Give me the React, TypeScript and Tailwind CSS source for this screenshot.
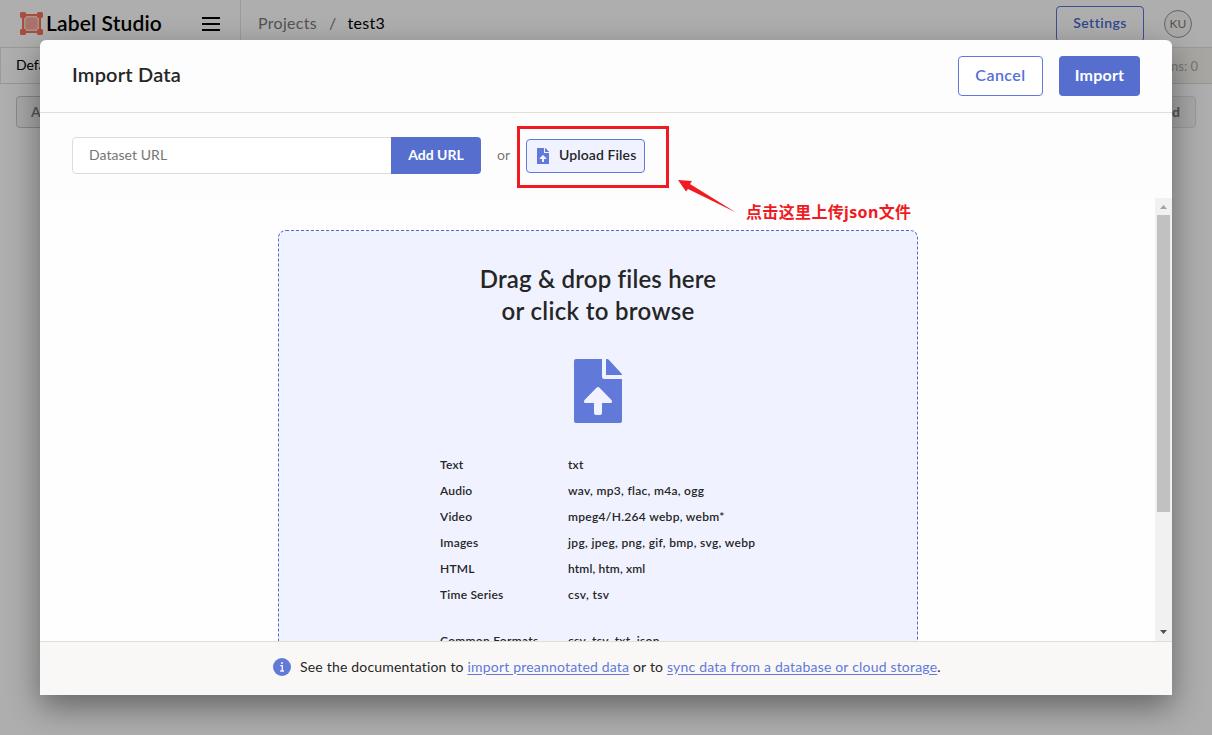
import React from "react";

const FORMATS: { label: string; types: string; typesCls: string }[] = [
  { label: "Text", types: "txt", typesCls: "tracking-[0.2px]" },
  { label: "Audio", types: "wav, mp3, flac, m4a, ogg", typesCls: "tracking-[0.3px]" },
  { label: "Video", types: "mpeg4/H.264 webp, webm*", typesCls: "tracking-[0.3px]" },
  { label: "Images", types: "jpg, jpeg, png, gif, bmp, svg, webp", typesCls: "tracking-[0.32px]" },
  { label: "HTML", types: "html, htm, xml", typesCls: "tracking-[0.14px]" },
  { label: "Time Series", types: "csv, tsv", typesCls: "tracking-[0.4px]" },
];

function FileUpload({ className }: { className: string }) {
  return (
    <svg viewBox="0 0 48 64" className={className} fill="#617ada">
      <path
        fillRule="evenodd"
        d="M2 0H28V17.5Q28 20 30.5 20H48V62Q48 64 46 64H2Q0 64 0 62V2Q0 0 2 0ZM22.5 28.8L10.5 41Q9 44 11.5 44H20V54Q20 56 22 56H26Q28 56 28 54V44H36.500Q39 44 37.500 41L25.500 28.800Q24 27.300 22.500 28.800Z"
      />
      <path d="M32 0H33Q34 0 34.800 .800L47.200 14.200Q48 15 48 16H32Z" />
    </svg>
  );
}

function Logo() {
  return (
    <svg viewBox="0 0 23 23" className="h-[23px] w-[23px] shrink-0">
      <path d="M3 3H20V20H3Z" fill="#f7d0c8" stroke="#f0705a" strokeWidth="2" />
      <path
        d="M1 0H5L6 1V5L5 6H1L0 5V1ZM18 0H22L23 1V5L22 6H18L17 5V1ZM1 17H5L6 18V22L5 23H1L0 22V18ZM18 17H22L23 18V22L22 23H18L17 22V18Z"
        fill="#f0705a"
      />
      <rect x="5.500" y="5.500" width="12" height="12" rx="3" fill="#f3a597" />
    </svg>
  );
}

function Page() {
  return (
    <div className="flex h-full flex-col bg-[#fafafa]">
      <header className="flex h-12 shrink-0 items-center border-b border-[#dddbd6]">
        <div className="flex h-full w-[241px] items-center border-r border-[#dfdfdf] pl-5">
          <Logo />
          <span className="-mt-px ml-[3px] whitespace-nowrap text-[21px] font-semibold tracking-[0.15px] text-black">
            Label Studio
          </span>
          <span className="ml-auto mr-5 flex w-[18px] flex-col gap-[4px]">
            <i className="h-[2px] bg-black" />
            <i className="h-[2px] bg-black" />
            <i className="h-[2px] bg-black" />
          </span>
        </div>
        <nav className="-mt-0.5 flex gap-3 pl-[17px] text-[16px] tracking-[0.3px] text-[#77777a]">
          <span>Projects</span>
          <span>/</span>
          <span className="-ml-px text-black">test3</span>
        </nav>
        <div className="ml-auto flex items-center gap-5 pr-5">
          <span className="flex h-9 w-[88px] items-center justify-center rounded border border-[#5570d8] pb-0.5 text-[14px] font-semibold tracking-[0.45px] text-[#4b65ca]">
            Settings
          </span>
          <span className="flex h-7 w-7 items-center justify-center rounded-full border border-[#8f8f8f] bg-[#f2f1ef] text-[12px] text-[#77777a]">
            KU
          </span>
        </div>
      </header>
      <div className="flex h-9 shrink-0 justify-between border-b border-[#d8d6d1] bg-[#efeeea]">
        <span className="w-[130px] border-l border-[#e0e0e0] bg-[#fafafa] pl-[15px] pt-[7px] text-[14px] leading-5 text-black">
          Default
        </span>
        <span className="pr-3.5 pt-2 text-[13px] leading-5 text-[#aaa9a7]">Submitted annotations: 0</span>
      </div>
      <div className="flex justify-between px-4 pt-3 text-[14px] font-semibold text-[#77777a]">
        <span className="flex h-8 w-24 items-center rounded border border-[#c3c3c3] bg-[#f0f0f0] pb-0.5 pl-[14px]">
          Actions
        </span>
        <span className="flex h-8 items-center rounded border border-[#dcdcdc] bg-[#f0f0f0] px-[15px] pb-0.5 font-bold">
          Grid
        </span>
      </div>
    </div>
  );
}

export default function App() {
  return (
    <div className="relative h-[735px] w-[1212px] overflow-hidden font-[Lato,'Noto_Sans_CJK_SC',sans-serif] [font-variant-ligatures:none]">
      <Page />
      <div className="absolute inset-0 bg-black/30 p-10">
        <section className="flex h-[655px] flex-col overflow-hidden rounded-t-md bg-[#fdfdfd] shadow-[0_12px_32px_rgba(0,0,0,0.42)]">
          <header className="flex h-[73px] shrink-0 items-center gap-4 border-b border-[#e1dfd5] px-8">
            <h1 className="mr-auto pb-1 text-[20px] font-semibold tracking-[0.2px] text-[#262626]">Import Data</h1>
            <button className="h-10 w-[85px] rounded border border-[#617ada] bg-white pb-0.5 text-[16px] font-semibold tracking-[0.45px] text-[#5570d8]">
              Cancel
            </button>
            <button className="h-10 w-[81px] rounded bg-[#566fcf] pb-0.5 text-[16px] font-bold tracking-[0.2px] text-white">
              Import
            </button>
          </header>
          <div className="flex h-[85px] shrink-0 items-center px-8 text-[14px]">
            <span className="flex h-[37px] w-80 items-center rounded-l border border-[#dfddd3] bg-white pb-0.5 pl-4 tracking-[0.05px] text-[#757575]">
              Dataset URL
            </span>
            <button className="-ml-px h-[37px] w-[90px] rounded-r bg-[#566fcf] pb-0.5 font-bold text-white">Add URL</button>
            <span className="ml-4 w-[13px] pb-0.5 text-[#77777a]">or</span>
            <button className="ml-4 flex h-[34px] w-[119px] items-center whitespace-nowrap rounded border border-[#617ada] bg-[#f0f3ff] pl-[10px] font-semibold text-[#262626]">
              <FileUpload className="mr-[10px] h-4 w-3" />
              <span className="pb-0.5 tracking-[0.1px]">Upload Files</span>
            </button>
          </div>
          <div className="flex min-h-0 flex-1 bg-[#fefefe]">
            <div className="flex-1 overflow-hidden pl-[238px] pt-8">
              <div className="flex h-[560px] w-[640px] flex-col rounded-lg border border-dashed border-[#5068cf] bg-[#f0f3ff] pt-8 text-[#262626]">
                <h2 className="text-center text-[24px] font-semibold leading-8 tracking-[0.18px]">
                  Drag &amp; drop files here
                  <br />
                  <span className="tracking-[0.32px]">or click to browse</span>
                </h2>
                <FileUpload className="mx-auto mt-8 h-16 w-12 shrink-0" />
                <dl className="ml-[161px] mt-[29px] grid grid-cols-[128px_1fr] text-[12px] font-semibold leading-[26px]">
                  {FORMATS.map((f) => (
                    <React.Fragment key={f.label}>
                      <dt className="tracking-[0.2px]">{f.label}</dt>
                      <dd className={f.typesCls}>{f.types}</dd>
                    </React.Fragment>
                  ))}
                  <dt className="mt-5 tracking-[0.3px]">Common Formats</dt>
                  <dd className="mt-5 tracking-[0.3px]">csv, tsv, txt, json</dd>
                </dl>
              </div>
            </div>
            <div className="flex w-[17px] flex-col items-center bg-[#f1f1f1]">
              <svg viewBox="0 0 17 17" className="h-[17px] w-[17px]">
                <path d="M5 11L8.500 7L12 11Z" fill="#a3a3a3" />
              </svg>
              <div className="h-[297px] w-[13px] bg-[#c1c1c1]" />
              <svg viewBox="0 0 17 17" className="mt-auto h-[17px] w-[17px]">
                <path d="M5 6L8.500 10L12 6Z" fill="#505050" />
              </svg>
            </div>
          </div>
          <footer className="flex h-[54px] shrink-0 items-center border-t border-[#e1dfd5] bg-[#f9f8f6] pb-[3px] pl-[233px] text-[14px] tracking-[0.19px] text-[#262626]">
            <svg viewBox="0 0 18 18" className="mr-[9px] h-[18px] w-[18px]">
              <circle cx="9" cy="9" r="9" fill="#617ada" />
              <path d="M7.300 7.700H9.300V13M7.200 13H11" stroke="#f9f8f6" strokeWidth="1.300" fill="none" />
              <circle cx="9" cy="5" r="1" fill="#f9f8f6" />
            </svg>
            <p className="whitespace-nowrap pb-0.5">
              See the documentation to{" "}
              <a className="text-[#617ada] underline underline-offset-2">import preannotated data</a> or to{" "}
              <a className="text-[#617ada] underline underline-offset-2">sync data from a database or cloud storage</a>.
            </p>
          </footer>
        </section>
      </div>
      <div className="absolute left-[517px] top-[126px] h-[62px] w-[152px] border-[3px] border-[#f01b22]" />
      <svg viewBox="0 0 58 34" className="absolute left-[678px] top-[179px] h-[34px] w-[58px]">
        <path d="M0 1L14 2L12 5L58 33.500L10 10L8 12.500Z" fill="#f01b22" />
      </svg>
      <span className="absolute left-[746px] top-[200px] whitespace-nowrap font-['Noto_Sans','Noto_Sans_CJK_SC',sans-serif] text-[16px] font-bold leading-6 tracking-[0.35px] text-[#f01b22]">
        点击这里上传json文件
      </span>
    </div>
  );
}
